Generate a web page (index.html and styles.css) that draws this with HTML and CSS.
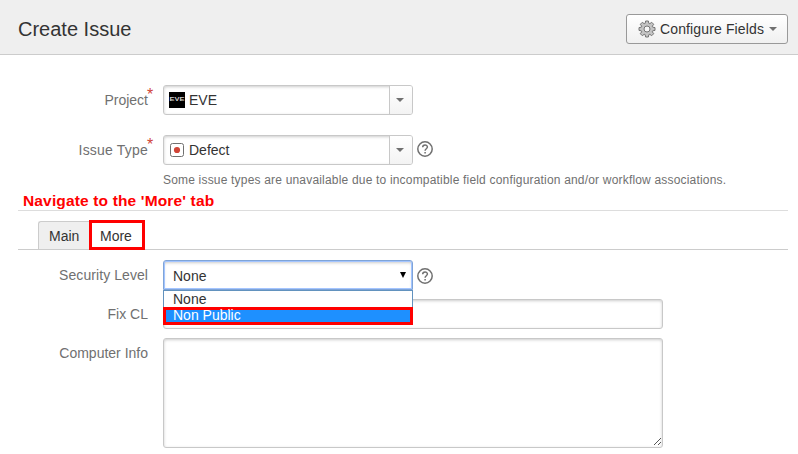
FILE: index.html
```html
<!DOCTYPE html>
<html lang="en">
<head>
<meta charset="utf-8">
<title>Create Issue</title>
<link rel="stylesheet" href="styles.css">
</head>
<body>
<header class="header">
  <h1>Create Issue</h1>
  <button class="configure" type="button">
    <svg class="gear" width="18" height="18" viewBox="0 0 18 18"><path d="M7.6 1h2.8l.4 2.3 1 .4 1.9-1.4 2 2-1.4 1.9.4 1 2.3.4v2.8l-2.3.4-.4 1 1.4 1.9-2 2-1.9-1.4-1 .4-.4 2.3H7.6l-.4-2.3-1-.4-1.9 1.4-2-2 1.4-1.9-.4-1L1 10.400V7.600l2.300-.4.4-1-1.400-1.900 2-2 1.900 1.400 1-.4z" fill="#c4c4c4" stroke="#757575"/><circle cx="9" cy="9" r="3" fill="#f7f7f7" stroke="#757575"/></svg>
    <span class="configure-text">Configure Fields</span>
    <span class="caret"></span>
  </button>
</header>
<main class="form">
  <div class="row project">
    <label>Project<sup>*</sup></label>
    <div class="picker">
      <svg width="16" height="16" viewBox="0 0 16 16"><path fill="#000" d="M0 0h16v16H0z"/><text class="logo-text" x="0.500" y="9.300" textLength="15" lengthAdjust="spacingAndGlyphs">EVE</text></svg>
      <span class="value">EVE</span><span class="drop"><span class="caret"></span></span>
    </div>
  </div>
  <div class="row type">
    <label class="wide">Issue Type<sup>*</sup></label>
    <div class="picker">
      <svg width="16" height="16" viewBox="0 0 16 16"><rect x="1.500" y="1.500" width="13" height="13" rx="2" fill="#fff" stroke="#707070"/><circle cx="8" cy="8" r="3.100" fill="#d04437"/></svg>
      <span class="value">Defect</span><span class="drop"><span class="caret"></span></span>
    </div>
    <svg class="help" width="16" height="16" viewBox="0 0 16 16"><circle cx="8" cy="8" r="7.200"/><path d="M5.700 6.300c0-3 4.700-3 4.700-.2 0 1.600-2.300 1.700-2.300 3.600M8.100 10.900v1.500"/></svg>
  </div>
  <p class="hint">Some issue types are unavailable due to incompatible field configuration and/or workflow associations.</p>
  <p class="note">Navigate to the 'More' tab</p>
  <nav class="tabs"><span class="tab main">Main</span><span class="tab more">More</span></nav>
  <div class="row security">
    <label class="level">Security Level</label>
    <div class="select">None<span class="arrow"></span>
      <div class="menu"><div class="option">None</div><div class="option selected">Non Public</div></div>
    </div>
    <svg class="help" width="16" height="16" viewBox="0 0 16 16"><circle cx="8" cy="8" r="7.200"/><path d="M5.700 6.300c0-3 4.700-3 4.700-.2 0 1.600-2.300 1.700-2.300 3.600M8.100 10.900v1.500"/></svg>
  </div>
  <div class="row fix"><label>Fix CL</label><div class="input"></div></div>
  <div class="row info"><label>Computer Info</label><div class="input area"><svg width="8" height="8" viewBox="0 0 8 8" shape-rendering="crispEdges"><path d="M0.500 7.500l7-7M4.500 7.500l3-3"/></svg></div></div>
</main>
</body>
</html>
```

FILE: styles.css
```css
* { box-sizing: border-box; }
body { margin: 0; background: #fff; color: #333; font: 14px/20px "Liberation Sans", Arial, sans-serif; overflow: hidden; }
.header { height: 55px; padding: 0 10px 0 18px; display: flex; align-items: center; justify-content: space-between; background: #efefef; border-bottom: 1px solid #ccc; }
h1 { margin: 4px 0 0; font-size: 20px; line-height: 28px; font-weight: 400; }
.configure { width: 162px; height: 30px; margin-top: 3px; padding: 0 10px 0 11px; display: flex; align-items: center; border: 1px solid #999; border-radius: 3px; background: linear-gradient(#fff, #f0f0f0); color: #333; font: inherit; }
.configure .caret { margin-left: 5px; }
.configure-text { margin-left: 4px; white-space: nowrap; letter-spacing: .13px; }
.gear { flex: none; }
.caret { border: solid transparent; border-width: 4px 4px 0; border-top-color: #707070; }
.row { display: flex; align-items: flex-start; }
.row label { width: 148px; margin-right: 15px; padding-top: 5px; text-align: right; color: #707070; flex: none; position: relative; }
.row .wide { letter-spacing: .2px; }
.row .level { letter-spacing: .07px; }
sup { position: absolute; left: 147px; top: 0; color: #d04437; font-size: 16px; line-height: 20px; }
.project { margin-top: 30px; height: 50px; }
.type { height: 36px; }
.picker, .select, .input { width: 250px; height: 30px; border: 1px solid #c8c8c8; border-radius: 3px; box-shadow: inset 0 1px 3px #ccc; }
.picker { display: flex; align-items: center; padding-left: 5px; }
.value { margin-left: 4px; flex: 1; }
.drop { width: 23px; height: 28px; border-left: 1px solid #c8c8c8; background: linear-gradient(#fff, #f3f3f3); display: flex; align-items: center; padding-left: 6px; border-radius: 0 2px 2px 0; }
.help { margin: 6px 0 0 4px; fill: none; stroke: #707070; stroke-width: 1.5; }
.hint { margin: 0 0 0 163px; font-size: 12px; line-height: 18px; letter-spacing: .186px; color: #707070; white-space: nowrap; }
.note { margin: 1px 10px 0 18px; padding-left: 5px; height: 21px; border-bottom: 1px solid #ddd; font-size: 15.5px; line-height: 21px; letter-spacing: .15px; font-weight: 700; color: #f00; }
.tabs { margin: 9px 10px 0 18px; padding-left: 20px; height: 30px; display: flex; align-items: flex-end; border-bottom: 1px solid #ccc; }
.main { width: 51px; height: 28px; padding: 4px 0 0 10px; border: solid #ccc; border-width: 1px 0 0 1px; border-radius: 3px 0 0; background: #efefef; }
.more { width: 56px; height: 30px; margin-bottom: -1px; padding: 3px 0 0 8px; border: 3px solid #f00; background: #fff; }
.security { height: 39px; margin-top: 10px; position: relative; z-index: 1; }
.select { position: relative; padding: 5px 0 0 9px; border: 1px solid #7fa4d8; border-radius: 3px 3px 0 0; box-shadow: inset 0 0 0 1px #a4c5ff, inset 0 2px 3px #ccc; }
.security .help { margin-top: 8px; }
.arrow { position: absolute; right: 6px; top: 11px; border: solid transparent; border-width: 6px 3.500px 0; border-top-color: #000; }
.menu { position: absolute; top: 29px; left: -1px; width: 250px; height: 34px; border: 1px solid #6292be; background: #fff; }
.option { height: 17px; padding-left: 9px; line-height: 17px; }
.selected { position: absolute; left: -1px; top: 16px; width: 250px; height: 18px; padding-left: 7px; border: 3px solid #f00; background: #1e90ff; color: #fff; line-height: 11px; }
.fix { height: 39px; }
.input { width: 500px; }
.area { height: 110px; display: flex; align-items: flex-end; justify-content: flex-end; padding: 1px; }
.area svg { stroke: #555; fill: none; }
.logo-text { fill: #ccc; font: 700 5px "Liberation Sans", sans-serif; }
```
